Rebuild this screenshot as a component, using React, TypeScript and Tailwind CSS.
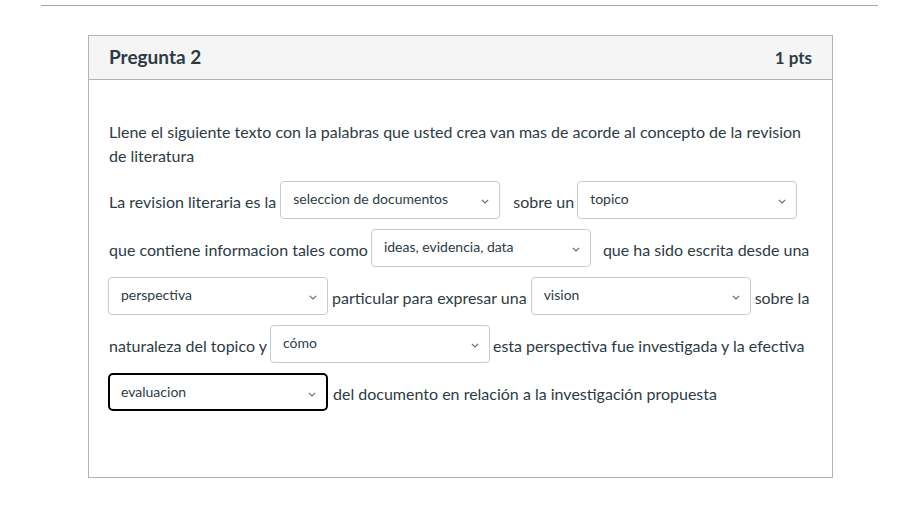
import React from "react";

const font = { fontFamily: "Lato, 'Open Sans', sans-serif" };

function Chevron() {
  return (
    <svg width="8" height="5" viewBox="0 0 8 5" className="absolute right-[10px] top-[17px]" fill="none">
      <path d="M0.8 0.8 L4 4 L7.2 0.8" stroke="#666" strokeWidth="1.1" />
    </svg>
  );
}

function Sel({ value, focused = false, className = "" }: { value: string; focused?: boolean; className?: string }) {
  return (
    <div
      className={
        "relative h-[38px] w-[220px] shrink-0 bg-white " +
        (focused
          ? "rounded-[5px] border-2 border-black "
          : "rounded-[4px] border border-[#c8ccd0] ") +
        className
      }
    >
      <span
        className={
          "absolute top-[8px] text-[14px] leading-[17px] text-[#2d3b45] " +
          (focused ? "left-[11px]" : "left-[12px]")
        }
      >
        {value}
      </span>
      <Chevron />
    </div>
  );
}

function T({ children, className = "" }: { children: React.ReactNode; className?: string }) {
  return <span className={"whitespace-nowrap pt-[3px] text-[16px] text-[#2d3b45] " + className}>{children}</span>;
}

export default function App() {
  return (
    <div className="h-[506px] w-[902px] bg-white" style={font}>
      <div className="pt-[5px] pl-[41px]">
        <div className="h-px w-[837px] bg-[#a6a6a6]" />
      </div>
      <div className="ml-[88px] mt-[29px] w-[745px] border border-[#b3b3b3] bg-white">
        <div className="flex h-[44px] items-center justify-between border-b border-[#b3b3b3] bg-[#f5f5f5] pl-[20px] pr-[20px]">
          <span className="text-[19px] font-bold text-[#2d3b45]">Pregunta 2</span>
          <span className="pt-[1px] text-[17px] font-bold text-[#2d3b45]">1 pts</span>
        </div>
        <div className="pl-[20px] pr-[21px] pt-[40px] pb-[61px]">
          <p className="text-[16px] leading-[24px] text-[#2d3b45]">
            Llene el siguiente texto con la palabras que usted crea van mas de acorde al concepto de la revision de literatura
          </p>
          <div className="mt-[8px] flex flex-col">
            <div className="flex h-[48px] items-center">
              <T>La revision literaria es la</T>
              <Sel value="seleccion de documentos" className="ml-[4px]" />
              <T className="ml-[13px]">sobre un</T>
              <Sel value="topico" className="ml-[3px]" />
            </div>
            <div className="flex h-[48px] items-center">
              <T>que contiene informacion tales como</T>
              <Sel value="ideas, evidencia, data" className="ml-[3px]" />
              <T className="ml-[12px]">que ha sido escrita desde una</T>
            </div>
            <div className="flex h-[48px] items-center">
              <Sel value="perspectiva" className="-ml-[1px]" />
              <T className="ml-[4px]">particular para expresar una</T>
              <Sel value="vision" className="ml-[4px]" />
              <T className="ml-[4px]">sobre la</T>
            </div>
            <div className="flex h-[48px] items-center">
              <T>naturaleza del topico y</T>
              <Sel value="cómo" className="ml-[3px]" />
              <T className="ml-[3px]">esta perspectiva fue investigada y la efectiva</T>
            </div>
            <div className="flex h-[48px] items-center">
              <Sel value="evaluacion" focused className="-ml-[1px]" />
              <T className="ml-[5px]">del documento en relación a la investigación propuesta</T>
            </div>
          </div>
        </div>
      </div>
    </div>
  );
}
